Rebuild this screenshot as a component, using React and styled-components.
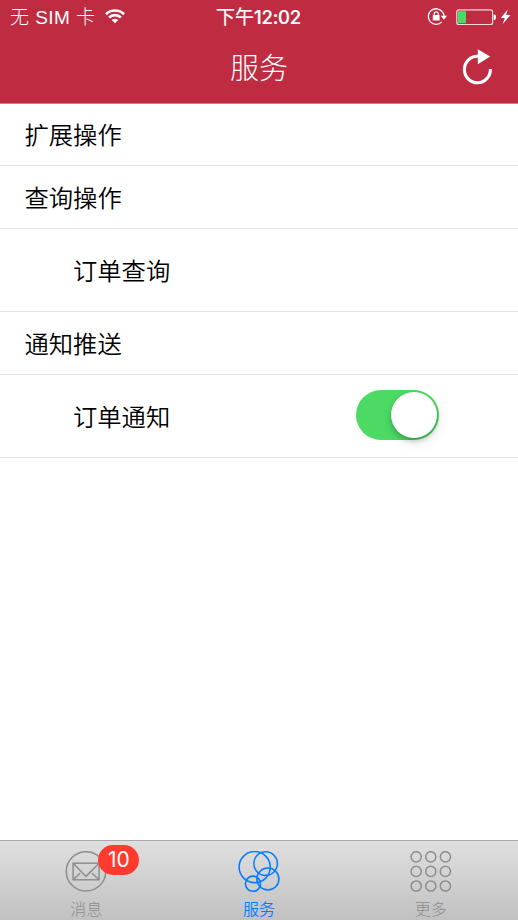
import React, { useState } from 'react';
import styled, { createGlobalStyle } from 'styled-components';

const GlobalStyle = createGlobalStyle`
    body {
        margin: 0;
        background: #fff;
        font-family: "Liberation Sans", "Noto Sans CJK SC", sans-serif;
    }
    * {
        box-sizing: border-box;
    }
    svg {
        display: block;
    }
`;

const Screen = styled.div`
    display: flex;
    flex-direction: column;
    width: 518px;
    height: 920px;
    overflow: hidden;
`;

const Header = styled.header`
    height: 104px;
    background: #bf2c42;
    border-bottom: 1px solid #c4808a;
    color: #fff;
`;

const StatusBar = styled.div`
    display: grid;
    grid-template-columns: 1fr auto 1fr;
    align-items: center;
    height: 33px;
    padding: 0 7px 0 10px;
    font-size: 19px;
    line-height: 33px;
`;

const Carrier = styled.div`
    display: flex;
    align-items: center;
    gap: 9.5px;
    font-weight: 300;
    white-space: pre;

    span {
        letter-spacing: 0.45px;
    }
    svg {
        margin-bottom: 1px;
    }
`;

const Clock = styled.div`
    padding: 1px 4px 0 0;
    font-size: 19px;
    font-weight: 400;
    -webkit-text-stroke: 0.2px #fff;

    span {
        font-family: Inter, sans-serif;
        font-size: 18.5px;
        font-weight: 500;
        letter-spacing: -0.2px;
    }
`;

const StatusIcons = styled.div`
    display: flex;
    justify-content: flex-end;
`;

const TitleBar = styled.div`
    display: grid;
    grid-template-columns: 1fr auto 1fr;
    align-items: center;
    height: 70px;
`;

const Title = styled.h1`
    grid-column: 2;
    margin: 0;
    padding-top: 1px;
    font-size: 29px;
    font-weight: 300;
    line-height: 68px;
`;

const RefreshButton = styled.button`
    justify-self: end;
    width: 34px;
    height: 38px;
    margin: 0 23px 2px 0;
    padding: 0;
    border: 0;
    background: none;
`;

const List = styled.main`
    flex: 1;
`;

const Row = styled.div`
    display: flex;
    align-items: center;
    justify-content: space-between;
    height: ${props => props.height}px;
    padding: 0 79.5px 2px ${props => (props.nested ? 73 : 24.5)}px;
    border-bottom: 1px solid #e4e4e4;
    color: #000;
    font-size: 24.3px;
    font-weight: 350;
`;

const Switch = styled.button`
    display: flex;
    justify-content: ${props => (props.$on ? 'flex-end' : 'flex-start')};
    width: 82.5px;
    height: 50px;
    padding: 2px 1.5px;
    border: 0;
    border-radius: 25px;
    background: ${props => (props.$on ? '#4cd964' : '#e5e5e5')};
`;

const Knob = styled.span`
    width: 46px;
    height: 46px;
    border-radius: 50%;
    background: #fff;
    box-shadow: 0 3px 5px rgba(0, 0, 0, 0.22), 2px 5px 14px rgba(0, 0, 0, 0.08);
`;

const TabBar = styled.nav`
    display: grid;
    grid-template-columns: repeat(3, 1fr);
    height: 80px;
    border-top: 1px solid #aaa;
    background: linear-gradient(#dfdfdf, #c1c1c1);
`;

const Tab = styled.div`
    display: flex;
    flex-direction: column;
    align-items: center;
    padding-top: 10px;
    color: ${props => (props.$active ? '#087cff' : '#8e8e8e')};
    font-size: 16px;
    font-weight: ${props => (props.$active ? 350 : 300)};
    line-height: 25px;

    &:last-child {
        padding-right: 2px;
    }
`;

const IconBox = styled.div`
    position: relative;
    width: 42px;
    height: 42px;
    margin-bottom: 4px;
`;

const Badge = styled.span`
    position: absolute;
    left: 33px;
    top: -6px;
    width: 41px;
    height: 30px;
    border-radius: 15px;
    background: #ff3b30;
    color: #fff;
    font-family: Inter, sans-serif;
    font-size: 21px;
    font-weight: 400;
    line-height: 30px;
    text-align: center;
`;

const WifiIcon = () => (
    <svg width="20" height="15" viewBox="0 0 20 15" fill="none" stroke="#fff" strokeWidth="2.7">
        <path d="M1 5.2a12.8 12.8 0 0 1 18 0" />
        <path d="M4.1 8.5a8.4 8.4 0 0 1 11.8 0" />
        <path d="M10 14.3l-3.3-3.2a4.7 4.7 0 0 1 6.6 0z" fill="#fff" stroke="none" />
    </svg>
);

const StatusGlyphs = () => (
    <svg width="84" height="20" viewBox="427 6.5 84 20" fill="none">
        <path d="M442.4 11.4a7.8 7.8 0 1 0 -0.6 10" stroke="#fff" strokeWidth="1.3" />
        <path d="M442.4 11.4a7.8 7.8 0 0 1 1.7 4" stroke="#fff" strokeWidth="1.3" />
        <path d="M440.8 15.2h6.2l-3.1 4z" fill="#fff" />
        <rect x="432.8" y="14.6" width="6.8" height="5.3" rx="0.5" fill="#fff" />
        <path d="M434.2 15v-1.6a2 2 0 0 1 4 0V15" stroke="#fff" strokeWidth="1.2" />
        <rect x="456.8" y="9.4" width="35.8" height="14.6" rx="2" stroke="#f6dce0" strokeWidth="1.2" />
        <rect x="458" y="10.7" width="8" height="12" fill="#4cd964" />
        <path d="M493.6 14h.7a1.6 1.6 0 0 1 1.6 1.6v2.2a1.6 1.6 0 0 1-1.6 1.6h-.7z" fill="#fff" />
        <path d="M507.8 9l-7 8.5h4L502.6 23.8l7.8-9.2h-4.3z" fill="#fff" />
    </svg>
);

const RefreshIcon = () => (
    <svg width="34" height="38" viewBox="461 48 34 38" fill="none">
        <path d="M478 56.2a13 13.3 0 1 0 12.4 12.8" stroke="#fff" strokeWidth="3.1" />
        <path d="M477.8 49.2v15L490.2 56.5z" fill="#fff" />
    </svg>
);

const MailIcon = () => (
    <svg width="42" height="42" viewBox="0 0 42 42" fill="none" stroke="currentColor" strokeWidth="1.5">
        <circle cx="21" cy="20.4" r="19.7" />
        <rect x="8.1" y="12.2" width="26" height="16.6" />
        <path d="M8.1 12.2L21 25.4l13.1-13.2M8.1 28.8l7-6.6M34.1 28.8l-7-6.6" />
    </svg>
);

const ServiceIcon = () => (
    <svg width="42" height="42" viewBox="0 0 42 42" fill="none" stroke="currentColor" strokeWidth="1.6">
        <circle cx="16.7" cy="16.1" r="15.6" />
        <circle cx="27.6" cy="12.6" r="11.8" />
        <circle cx="29.9" cy="28" r="11" />
        <circle cx="15" cy="32.7" r="7.6" />
    </svg>
);

const MoreIcon = () => (
    <svg width="42" height="42" viewBox="0 0 42 42" fill="none" stroke="currentColor" strokeWidth="1.5">
        {[5.8, 20.4, 35].map(cy =>
            [6.2, 20.8, 35.4].map(cx => <circle key={cx + '-' + cy} cx={cx} cy={cy} r="5.1" />)
        )}
    </svg>
);

const App = () => {
    const [notify, setNotify] = useState(true);

    return (
        <Screen>
            <GlobalStyle />
            <Header>
                <StatusBar>
                    <Carrier>
                        <span>无 SIM 卡</span>
                        <WifiIcon />
                    </Carrier>
                    <Clock>下午<span>12:02</span></Clock>
                    <StatusIcons>
                        <StatusGlyphs />
                    </StatusIcons>
                </StatusBar>
                <TitleBar>
                    <Title>服务</Title>
                    <RefreshButton>
                        <RefreshIcon />
                    </RefreshButton>
                </TitleBar>
            </Header>
            <List>
                <Row height={62}>扩展操作</Row>
                <Row height={63}>查询操作</Row>
                <Row height={83} nested>订单查询</Row>
                <Row height={63}>通知推送</Row>
                <Row height={83} nested>
                    订单通知
                    <Switch $on={notify} onClick={() => setNotify(!notify)}>
                        <Knob />
                    </Switch>
                </Row>
            </List>
            <TabBar>
                <Tab>
                    <IconBox>
                        <MailIcon />
                        <Badge>10</Badge>
                    </IconBox>
                    消息
                </Tab>
                <Tab $active>
                    <IconBox>
                        <ServiceIcon />
                    </IconBox>
                    服务
                </Tab>
                <Tab>
                    <IconBox>
                        <MoreIcon />
                    </IconBox>
                    更多
                </Tab>
            </TabBar>
        </Screen>
    );
};

export default App;
